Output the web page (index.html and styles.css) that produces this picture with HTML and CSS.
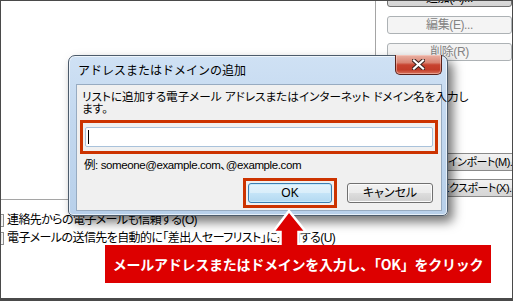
FILE: index.html
```html
<!DOCTYPE html>
<html lang="ja">
<head>
<meta charset="utf-8">
<title>アドレスまたはドメインの追加</title>
<link rel="stylesheet" href="styles.css">
</head>
<body>
<div class="screen">
  <div class="left">
    <div class="listbox"></div>
    <div class="opts">
      <div class="opt"><span class="cb"></span><span>連絡先からの電子メールも信頼する(O)</span></div>
      <div class="opt"><span class="cb"></span><span>電子メールの送信先を自動的に「差出人セーフリスト」に追加する(U)</span></div>
    </div>
  </div>
  <div class="side">
    <div class="sbtn enabled">追加(A)...</div>
    <div class="sbtn disabled">編集(E)...</div>
    <div class="sbtn disabled">削除(R)</div>
    <div class="spacer"></div>
    <div class="sbtn wide imp">インポート(M)...</div>
    <div class="sbtn wide exp">エクスポート(X)...</div>
  </div>

  <div class="dialog">
    <div class="titlebar">
      <span class="title">アドレスまたはドメインの追加</span>
      <span class="close">
        <svg width="13" height="11" viewBox="0 0 13 11">
          <path d="M2 1.5 L11 9.5 M11 1.5 L2 9.5" stroke="#3d2420" stroke-width="4.2" stroke-linecap="square" fill="none"/>
          <path d="M2 1.5 L11 9.5 M11 1.5 L2 9.5" stroke="#ffffff" stroke-width="2.2" stroke-linecap="square" fill="none"/>
        </svg>
      </span>
    </div>
    <div class="panel">
      <p class="prompt">リストに追加する電子メール アドレスまたはインターネット ドメイン名を入力し<br>ます。</p>
      <div class="mark mark-input">
        <div class="textbox"><span class="caret"></span></div>
      </div>
      <p class="example">例: someone@example.com、@example.com</p>
      <div class="actions">
        <div class="mark mark-ok"><span class="btn default">OK</span></div>
        <span class="btn">キャンセル</span>
      </div>
    </div>
  </div>

  <svg class="arrow" width="40" height="40" viewBox="0 0 40 40">
    <polygon points="19,2 36,23 28.5,23 28.5,40 10.5,40 10.5,23 3,23" fill="#dd0000" stroke="#ffffff" stroke-width="2.5" stroke-linejoin="miter"/>
  </svg>
  <div class="banner">メールアドレスまたはドメインを入力し、「OK」をクリック</div>
</div>
</body>
</html>
```
FILE: styles.css
```css
html, body {
  margin: 0;
  padding: 0;
  background: #ffffff;
}

.screen {
  position: relative;
  box-sizing: border-box;
  width: 513px;
  height: 301px;
  border: 1px solid #4a4a4a;
  border-bottom-width: 3px;
  background: #ffffff;
  overflow: hidden;
  display: flex;
  font-family: "Liberation Sans", "Noto Sans CJK JP", sans-serif;
  font-size: 12px;
  color: #000000;
  font-feature-settings: "palt";
}

.left {
  width: 375px;
  flex: none;
  display: flex;
  flex-direction: column;
}

.listbox {
  box-sizing: border-box;
  height: 199px;
  border-right: 1px solid #a5a5a5;
  border-bottom: 1px solid #a5a5a5;
}

.opts {
  margin-top: 11px;
}

.opt {
  height: 18px;
  line-height: 18px;
  display: flex;
  align-items: center;
  white-space: nowrap;
  letter-spacing: -0.6px;
}

.cb {
  box-sizing: border-box;
  width: 13px;
  height: 13px;
  margin-left: -10px;
  margin-right: 3px;
  border: 1px solid #8e8f8f;
  background: linear-gradient(#dcdcdc, #f5f5f5);
  box-shadow: inset 0 0 0 1px #f4f4f4;
  flex: none;
}

.side {
  flex: 1;
  padding-left: 11px;
  display: flex;
  flex-direction: column;
  gap: 9px;
  min-width: 0;
  letter-spacing: -0.4px;
}

.sbtn {
  box-sizing: border-box;
  flex: none;
  width: 125px;
  height: 18px;
  line-height: 16px;
  text-align: center;
  border: 1px solid #adb2b5;
  border-radius: 3px;
  white-space: nowrap;
}

.sbtn.enabled {
  margin-top: -12px;
  border-color: #707070;
  background: linear-gradient(#e6e6e6, #d4d4d4);
}

.sbtn.disabled {
  color: #838383;
  background: #f4f4f4;
}

.spacer {
  height: 75px;
  flex: none;
}

.sbtn.wide {
  width: 160px;
  text-align: left;
  border-color: #8a8a8a;
  border-radius: 3px 0 0 3px;
  border-right: none;
  background: linear-gradient(#f2f2f2 0%, #ebebeb 50%, #dddddd 50%, #d6d6d6 100%);
  overflow: hidden;
  font-size: 11px;
  letter-spacing: -0.5px;
}

.sbtn.imp {
  margin-top: -1px;
  padding-left: 60px;
}

.sbtn.exp {
  margin-top: -1px;
  padding-left: 51px;
}

/* dialog */
.dialog {
  position: absolute;
  left: 67px;
  top: 54px;
  box-sizing: border-box;
  width: 380px;
  height: 161px;
  padding: 0 5px 0 7px;
  border: 1px solid #4c5b6b;
  border-radius: 7px 7px 5px 5px;
  background: linear-gradient(180deg, #cfe1f4 0%, #c3d8ef 40%, #b8d0ea 100%);
  box-shadow: inset 0 0 0 1px rgba(255, 255, 255, 0.65), 5px 6px 11px rgba(0, 0, 0, 0.55);
  font-family: "Noto Sans CJK JP", sans-serif;
}

.titlebar {
  height: 28px;
  display: flex;
  justify-content: space-between;
  align-items: flex-start;
}

.title {
  line-height: 28px;
  padding-left: 2px;
  font-size: 12px;
  font-feature-settings: normal;
  color: #000000;
}

.close {
  box-sizing: border-box;
  margin-top: -1px;
  width: 47px;
  height: 20px;
  border: 1px solid #5b2119;
  border-top: none;
  border-radius: 0 0 5px 5px;
  background: linear-gradient(180deg, #eab2a5 0%, #d98472 40%, #c8432f 52%, #c23c28 78%, #d9745e 100%);
  box-shadow: inset 0 0 0 1px rgba(255, 220, 210, 0.45);
  display: flex;
  align-items: center;
  justify-content: center;
}

.close svg {
  display: block;
}

.panel {
  box-sizing: border-box;
  width: 366px;
  height: 127px;
  border: 1px solid #97abc1;
  background: #f0f0f0;
  padding: 6px 2px 0 2px;
  font-family: "Liberation Sans", "Noto Sans CJK JP", sans-serif;
}

.prompt {
  margin: 0 0 5px 3px;
  font-size: 11.6px;
  line-height: 12px;
  white-space: nowrap;
}

.mark {
  border: 3px solid #cc3300;
}

.mark-input {
  padding: 4px 2px;
  margin: 0 1px;
}

.textbox {
  box-sizing: border-box;
  height: 20px;
  background: #ffffff;
  border: 1px solid #a9c2db;
  border-radius: 2px;
  display: flex;
  align-items: center;
}

.caret {
  width: 1px;
  height: 14px;
  margin-left: 2px;
  background: #000000;
}

.example {
  margin: 5px 0 0 5px;
  font-size: 11.5px;
  letter-spacing: -0.4px;
  line-height: 12px;
}

.actions {
  margin-top: 7px;
  padding-right: 6px;
  display: flex;
  justify-content: flex-end;
  align-items: center;
  gap: 10px;
}

.mark-ok {
  padding: 2px;
  display: flex;
}

.btn {
  box-sizing: border-box;
  width: 86px;
  height: 20px;
  line-height: 18px;
  text-align: center;
  border: 1px solid #707070;
  border-radius: 3px;
  background: linear-gradient(#f2f2f2 0%, #ebebeb 48%, #dddddd 52%, #cfcfcf 100%);
  box-shadow: inset 0 0 0 1px #fbfbfb;
  font-feature-settings: "palt";
}

.btn.default {
  width: 84px;
  border-color: #3c7fb1;
  background: linear-gradient(#e5f4fc 0%, #d9eefa 48%, #c4e4f7 52%, #b3d9f1 100%);
  box-shadow: inset 0 0 0 1px #c5eafd;
}

/* annotations */
.arrow {
  position: absolute;
  left: 269px;
  top: 208px;
  display: block;
}

.banner {
  position: absolute;
  left: 104px;
  top: 244px;
  width: 386px;
  height: 38px;
  line-height: 38px;
  background: #dd0000;
  color: #ffffff;
  font-family: "Noto Sans CJK JP", sans-serif;
  font-weight: bold;
  font-size: 14px;
  letter-spacing: -0.25px;
  text-align: center;
  white-space: nowrap;
  font-feature-settings: normal;
}
```
